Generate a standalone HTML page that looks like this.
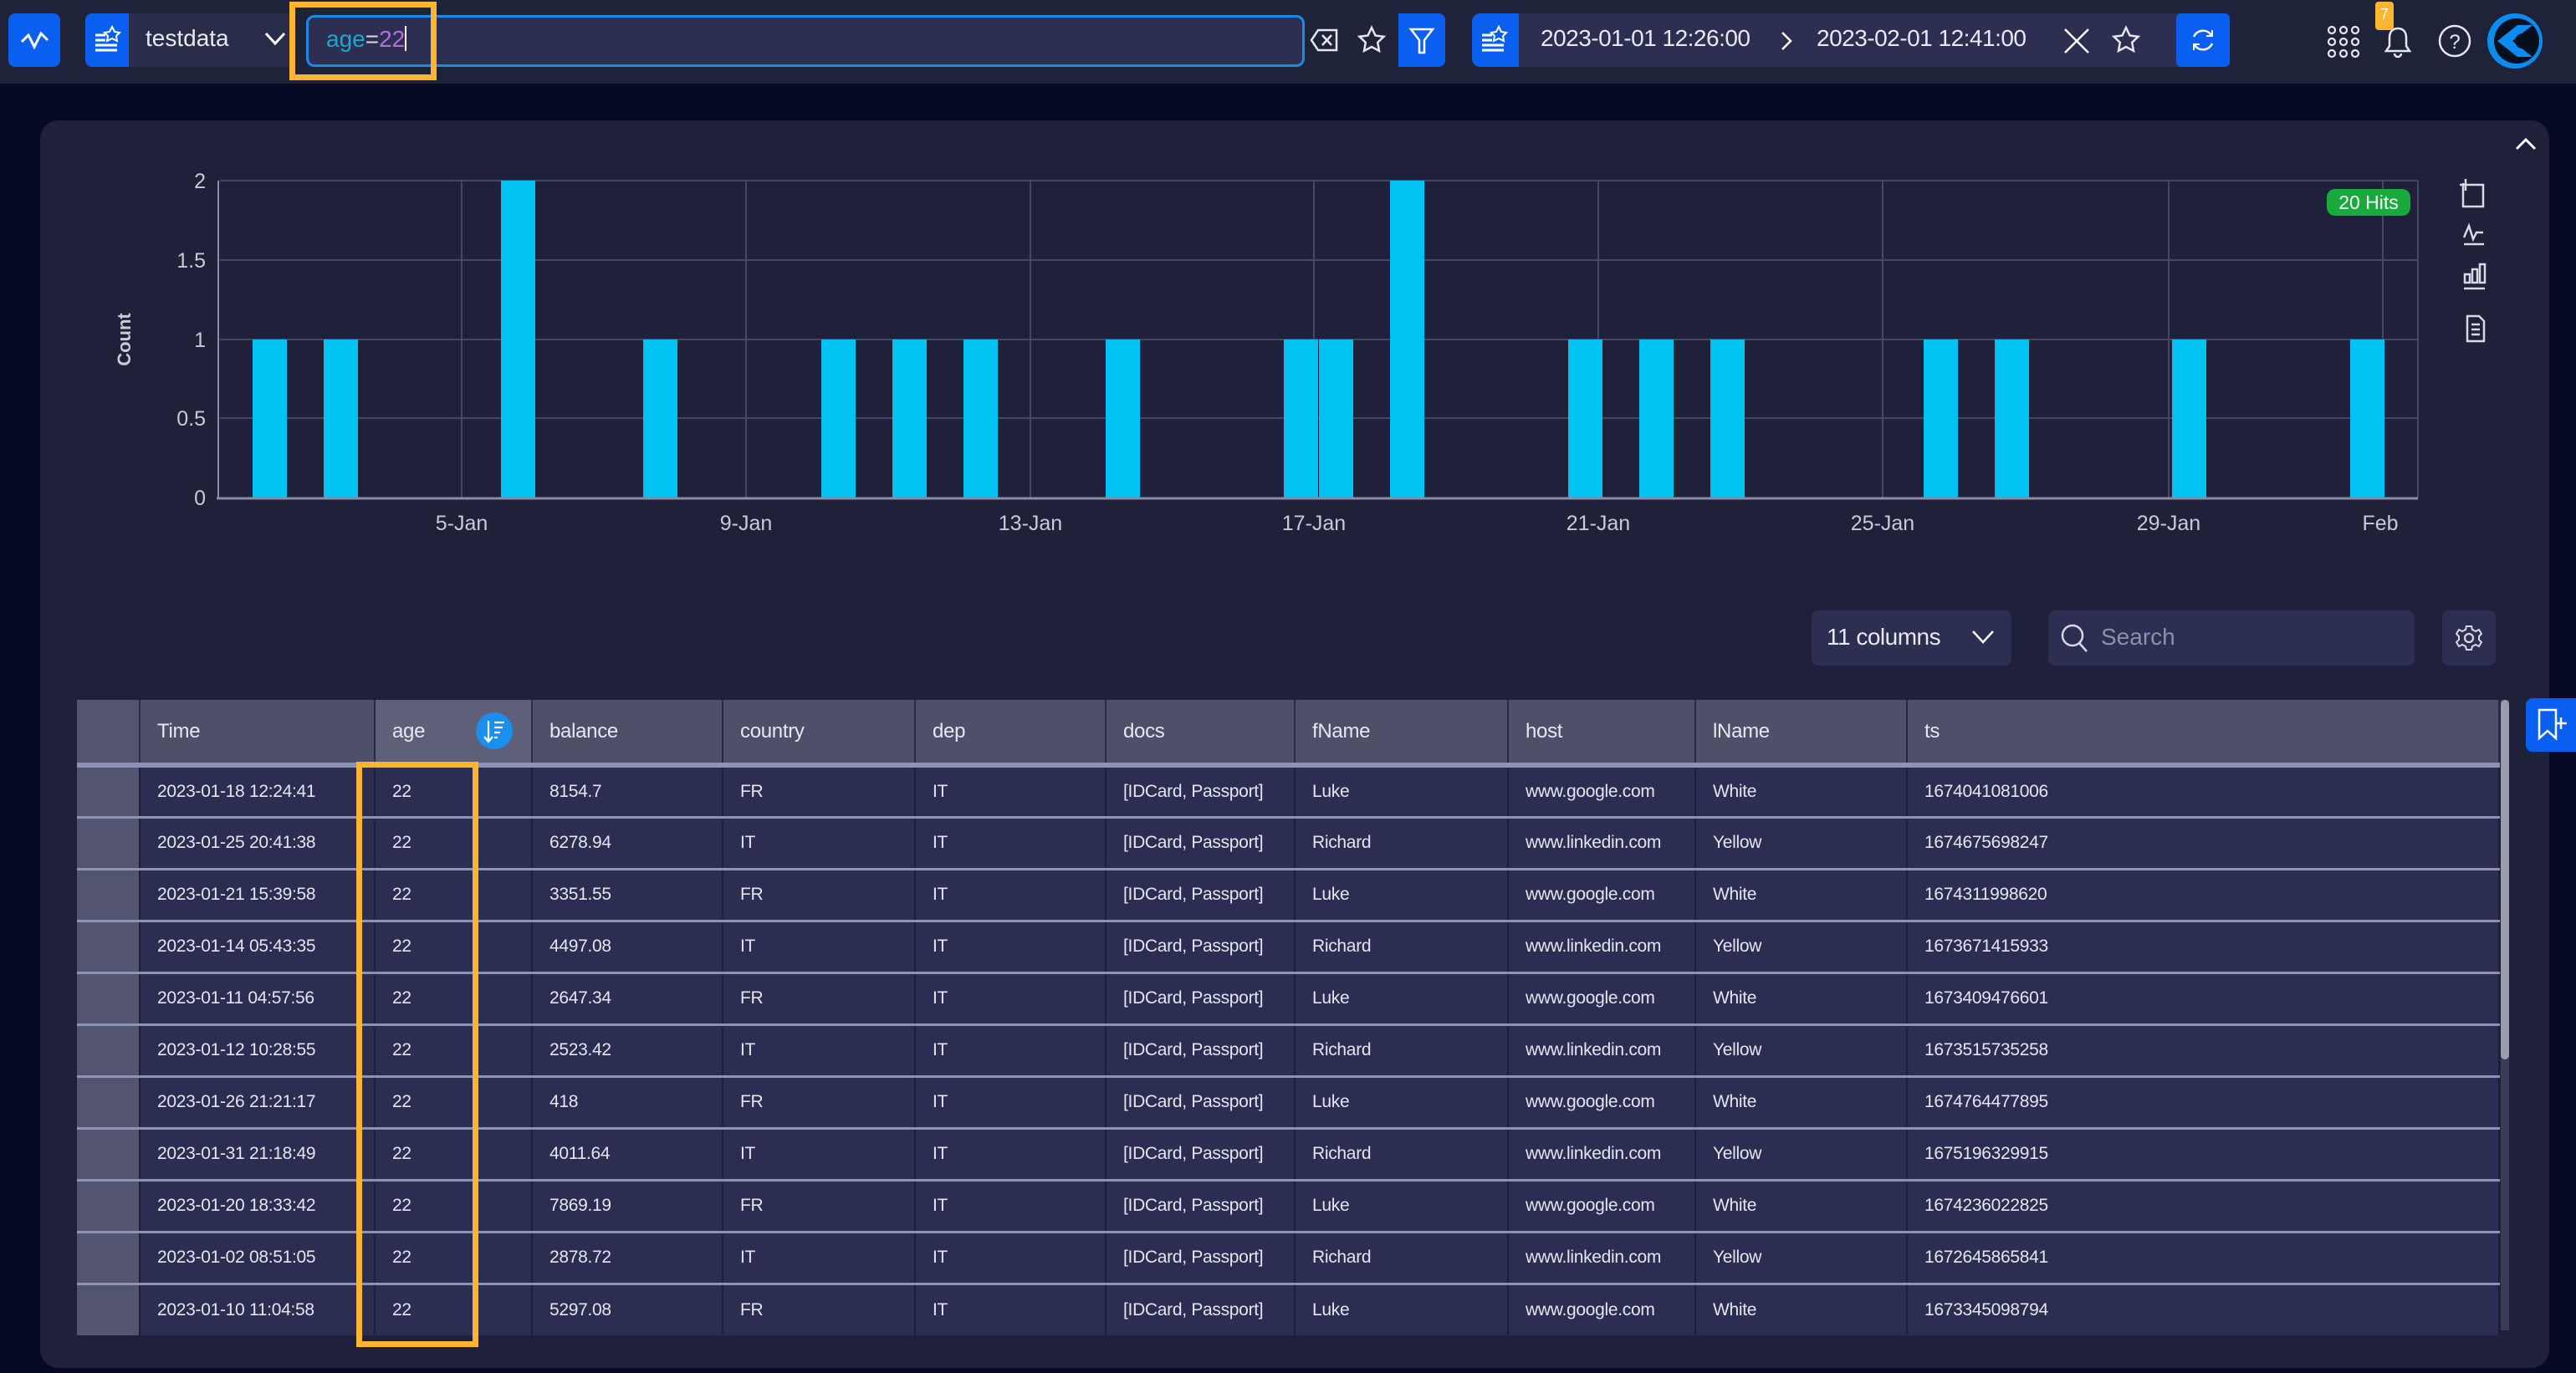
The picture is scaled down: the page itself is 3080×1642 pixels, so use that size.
<!DOCTYPE html>
<html><head><meta charset="utf-8"><style>
*{box-sizing:border-box;margin:0;padding:0}
body{width:3080px;height:1642px;background:#060a24;font-family:"Liberation Sans",sans-serif;color:#e8e9f0;position:relative;overflow:hidden}
.abs{position:absolute}
.blue{background:#0b5ff0}
table{position:absolute;left:92px;top:837px;border-collapse:collapse;table-layout:fixed;width:2896px;font-size:21px;letter-spacing:-.3px}
th{height:78px;background:#4d5068;font-weight:normal;text-align:left;padding-left:20px;font-size:24px;color:#e6e7ef;border-right:2px solid #2a2c45;border-bottom:6px solid #8d93b5}
td{height:62px;background:#2b2e52;padding-left:20px;border-right:2px solid #1d1f38;border-top:3px solid #8d93b5;color:#e4e5ee;white-space:nowrap}
tbody tr:first-child td{border-top:none}
td.g,th.g{background:#525470;padding:0}
.ico{stroke:#d8d9e4;fill:none;stroke-width:2.5}
</style></head><body>
<div class="abs" style="left:0;top:0;width:3080px;height:100px;background:#1f2339"></div>
<div class="abs blue" style="left:10px;top:16px;width:62px;height:64px;border-radius:8px"></div>
<svg class="abs" style="left:24px;top:32px" width="36" height="32"><path d="M2 18 L10 10 L17 24 L25 8 L33 16" stroke="#fff" stroke-width="3" fill="none"/></svg>
<div class="abs" style="left:102px;top:16px;width:250px;height:64px;background:#2a2d4a;border-radius:8px"></div>
<div class="abs blue" style="left:102px;top:16px;width:52px;height:64px;border-radius:8px 0 0 8px"></div>
<svg class="abs" style="left:110px;top:28px" width="36" height="40"><path d="M4 14h12M4 20h12M4 26h26M4 32h26" stroke="#fff" stroke-width="3"/><path d="M24 4l3 6 6 1-4 4 1 6-6-3-6 3 1-6-4-4 6-1z" stroke="#fff" stroke-width="2" fill="none"/></svg>
<div class="abs" style="left:174px;top:30px;font-size:28px">testdata</div>
<svg class="abs" style="left:316px;top:38px" width="26" height="18"><path d="M2 2l11 12 11-12" stroke="#fff" stroke-width="3" fill="none"/></svg>
<div class="abs" style="left:366px;top:18px;width:1194px;height:62px;background:#2c2f52;border:3px solid #1e88e5;border-radius:10px"></div>
<div class="abs" style="left:390px;top:31px;font-size:28px"><span style="color:#1fa6c9">age</span><span style="color:#ddd">=</span><span style="color:#b56edc">22</span><span style="display:inline-block;width:2px;height:30px;background:#fff;vertical-align:-5px"></span></div>
<div class="abs" style="left:346px;top:2px;width:176px;height:94px;border:7px solid #fbb52e"></div>
<svg class="abs" style="left:1566px;top:34px" width="34" height="28"><path d="M10 2h22v24H10L2 14z" stroke="#e5e6ee" stroke-width="2.5" fill="none"/><path d="M15 8l11 12M26 8L15 20" stroke="#e5e6ee" stroke-width="2.5"/></svg>
<svg class="abs" style="left:1622px;top:30px" width="36" height="36"><path d="M18 3l4.5 9.5 10 1.3-7.3 7 1.8 10L18 26l-9 4.8 1.8-10-7.3-7 10-1.3z" stroke="#e5e6ee" stroke-width="2.5" fill="none"/></svg>
<div class="abs blue" style="left:1672px;top:16px;width:56px;height:64px;border-radius:0 8px 8px 0"></div>
<svg class="abs" style="left:1684px;top:32px" width="32" height="34"><path d="M3 3h26L19 16v15h-6V16z" stroke="#fff" stroke-width="2.5" fill="none"/></svg>
<div class="abs" style="left:1760px;top:16px;width:862px;height:64px;background:#2c2f52;border-radius:10px"></div>
<div class="abs blue" style="left:1760px;top:16px;width:56px;height:64px;border-radius:10px 0 0 10px"></div>
<svg class="abs" style="left:1768px;top:28px" width="36" height="40"><path d="M4 14h12M4 20h12M4 26h26M4 32h26" stroke="#fff" stroke-width="3"/><path d="M24 4l3 6 6 1-4 4 1 6-6-3-6 3 1-6-4-4 6-1z" stroke="#fff" stroke-width="2" fill="none"/></svg>
<div class="abs" style="left:1842px;top:30px;font-size:28px;letter-spacing:-.5px">2023-01-01 12:26:00</div>
<svg class="abs" style="left:2128px;top:36px" width="16" height="26"><path d="M3 3l10 10-10 10" stroke="#fff" stroke-width="2.5" fill="none"/></svg>
<div class="abs" style="left:2172px;top:30px;font-size:28px;letter-spacing:-.5px">2023-02-01 12:41:00</div>
<svg class="abs" style="left:2466px;top:32px" width="34" height="34"><path d="M3 3l28 28M31 3L3 31" stroke="#fff" stroke-width="2.5"/></svg>
<svg class="abs" style="left:2524px;top:30px" width="36" height="36"><path d="M18 3l4.5 9.5 10 1.3-7.3 7 1.8 10L18 26l-9 4.8 1.8-10-7.3-7 10-1.3z" stroke="#e5e6ee" stroke-width="2.5" fill="none"/></svg>
<div class="abs blue" style="left:2602px;top:16px;width:64px;height:64px;border-radius:6px"></div>
<svg class="abs" style="left:2618px;top:32px" width="32" height="32"><path d="M26 10A12 12 0 0 0 5 12M6 22a12 12 0 0 0 21-2" stroke="#fff" stroke-width="2.5" fill="none"/><path d="M27 4v7h-7M5 28v-7h7" stroke="#fff" stroke-width="2" fill="none"/></svg>
<svg class="abs" style="left:2782px;top:30px" width="40" height="40"><g stroke="#e5e6ee" stroke-width="2.2" fill="none"><circle cx="6" cy="6" r="4"/><circle cx="20" cy="6" r="4"/><circle cx="34" cy="6" r="4"/><circle cx="6" cy="20" r="4"/><circle cx="20" cy="20" r="4"/><circle cx="34" cy="20" r="4"/><circle cx="6" cy="34" r="4"/><circle cx="20" cy="34" r="4"/><circle cx="34" cy="34" r="4"/></g></svg>
<svg class="abs" style="left:2850px;top:28px" width="34" height="42"><path d="M17 6c-7 0-10 5-10 11v10l-4 6h28l-4-6V17c0-6-3-11-10-11zM13 36a4 4 0 0 0 8 0" stroke="#e5e6ee" stroke-width="2.5" fill="none"/></svg>
<div class="abs" style="left:2840px;top:2px;width:22px;height:34px;background:#fbb52e;border-radius:4px;font-size:18px;color:#fff;text-align:center;line-height:30px">7</div>
<svg class="abs" style="left:2914px;top:28px" width="42" height="42"><circle cx="21" cy="21" r="18" stroke="#e5e6ee" stroke-width="2.5" fill="none"/><text x="21" y="30" font-size="24" fill="#e5e6ee" text-anchor="middle" font-family="Liberation Sans">?</text></svg>
<svg class="abs" style="left:2972px;top:14px" width="70" height="70"><circle cx="35" cy="35" r="33" fill="#0a8cf0"/><circle cx="37" cy="35" r="27" fill="#05101f"/><path d="M14 35L38 16h18L32 35l24 19H38z" fill="#0a8cf0"/><circle cx="44" cy="35" r="9" fill="#05101f"/></svg>

<div class="abs" style="left:48px;top:144px;width:3000px;height:1492px;background:#1e2139;border-radius:22px"></div>
<svg class="abs" style="left:3006px;top:162px" width="28" height="20"><path d="M3 16L14 5l11 11" stroke="#fff" stroke-width="3" fill="none"/></svg>
<svg class="abs" style="left:0;top:0" width="3000" height="660">
<g stroke="#444862" stroke-width="2">
<line x1="263" y1="216" x2="2891" y2="216"/><line x1="263" y1="311" x2="2891" y2="311"/><line x1="263" y1="406" x2="2891" y2="406"/><line x1="263" y1="500" x2="2891" y2="500"/>
<line x1="552" y1="216" x2="552" y2="595"/><line x1="892" y1="216" x2="892" y2="595"/><line x1="1232" y1="216" x2="1232" y2="595"/><line x1="1571" y1="216" x2="1571" y2="595"/><line x1="1911" y1="216" x2="1911" y2="595"/><line x1="2251" y1="216" x2="2251" y2="595"/><line x1="2593" y1="216" x2="2593" y2="595"/><line x1="2849" y1="216" x2="2849" y2="595"/><line x1="2891" y1="216" x2="2891" y2="595"/>
</g>
<g fill="#00c2f3">
<rect x="302" y="406" width="41" height="189"/><rect x="387" y="406" width="41" height="189"/><rect x="599" y="216" width="41" height="379"/><rect x="769" y="406" width="41" height="189"/><rect x="982" y="406" width="41" height="189"/><rect x="1067" y="406" width="41" height="189"/><rect x="1152" y="406" width="41" height="189"/><rect x="1322" y="406" width="41" height="189"/><rect x="1535" y="406" width="41" height="189"/><rect x="1577" y="406" width="41" height="189"/><rect x="1662" y="216" width="41" height="379"/><rect x="1875" y="406" width="41" height="189"/><rect x="1960" y="406" width="41" height="189"/><rect x="2045" y="406" width="41" height="189"/><rect x="2300" y="406" width="41" height="189"/><rect x="2385" y="406" width="41" height="189"/><rect x="2597" y="406" width="41" height="189"/><rect x="2810" y="406" width="41" height="189"/>
</g>
<line x1="261" y1="216" x2="261" y2="596" stroke="#8a8da3" stroke-width="2"/>
<line x1="259" y1="596" x2="2891" y2="596" stroke="#8a8da3" stroke-width="3"/>
<g font-family="Liberation Sans" font-size="25" fill="#c9cad6" text-anchor="end">
<text x="246" y="225">2</text><text x="246" y="320">1.5</text><text x="246" y="415">1</text><text x="246" y="509">0.5</text><text x="246" y="604">0</text></g>
<text transform="translate(156,406) rotate(-90)" font-family="Liberation Sans" font-size="22" font-weight="bold" fill="#c9cad6" text-anchor="middle">Count</text>
<g font-family="Liberation Sans" font-size="25" fill="#c9cad6" text-anchor="middle">
<text x="552" y="634">5-Jan</text><text x="892" y="634">9-Jan</text><text x="1232" y="634">13-Jan</text><text x="1571" y="634">17-Jan</text><text x="1911" y="634">21-Jan</text><text x="2251" y="634">25-Jan</text><text x="2593" y="634">29-Jan</text><text x="2846" y="634">Feb</text></g>
<rect x="2782" y="226" width="100" height="32" rx="10" fill="#18aa3c"/>
<text x="2832" y="250" font-family="Liberation Sans" font-size="23" fill="#fff" text-anchor="middle">20 Hits</text>
<g class="ico"><path d="M2948 214v14M2941 221h28v26h-24v-28"/><path d="M2946 284l6-14 5 16 4-8h8M2946 292h24"/><path d="M2947 338v-10h6v10zM2956 338v-16h6v16zM2965 338v-22h6v22zM2946 345h25"/><path d="M2950 378h14l6 6v24h-20zM2955 388h10M2955 394h10M2955 400h10"/></g>
</svg>

<div class="abs" style="left:2166px;top:730px;width:239px;height:66px;background:#2c2f52;border-radius:8px"></div>
<div class="abs" style="left:2184px;top:746px;font-size:28px;letter-spacing:-.5px">11 columns</div>
<svg class="abs" style="left:2356px;top:752px" width="30" height="20"><path d="M3 3l12 13 12-13" stroke="#fff" stroke-width="2.5" fill="none"/></svg>
<div class="abs" style="left:2449px;top:730px;width:438px;height:66px;background:#2c2f52;border-radius:8px"></div>
<svg class="abs" style="left:2462px;top:744px" width="38" height="40"><circle cx="16" cy="16" r="12" stroke="#d8d9e4" stroke-width="2.5" fill="none"/><path d="M24 25l9 10" stroke="#d8d9e4" stroke-width="2.5"/></svg>
<div class="abs" style="left:2512px;top:746px;font-size:28px;color:#8e90a6">Search</div>
<div class="abs" style="left:2920px;top:730px;width:64px;height:66px;background:#2c2f52;border-radius:8px"></div>
<svg class="abs" style="left:2936px;top:747px" width="32" height="32"><circle cx="16" cy="16" r="5" stroke="#d8d9e4" stroke-width="2.2" fill="none"/><path d="M13 2h6l1 4 4 2 4-2 3 5-3 3v4l3 3-3 5-4-2-4 2-1 4h-6l-1-4-4-2-4 2-3-5 3-3v-4l-3-3 3-5 4 2 4-2z" stroke="#d8d9e4" stroke-width="2" fill="none"/></svg>

<table>
<colgroup><col style="width:75px"><col style="width:281px"><col style="width:188px"><col style="width:228px"><col style="width:230px"><col style="width:228px"><col style="width:226px"><col style="width:255px"><col style="width:224px"><col style="width:253px"><col style="width:708px"></colgroup>
<thead><tr><th class="g"></th><th>Time</th><th style="background:#5e6079">age</th><th>balance</th><th>country</th><th>dep</th><th>docs</th><th>fName</th><th>host</th><th>lName</th><th>ts</th></tr></thead>
<tbody>
<tr><td class="g"></td><td>2023-01-18 12:24:41</td><td>22</td><td>8154.7</td><td>FR</td><td>IT</td><td>[IDCard, Passport]</td><td>Luke</td><td>www.google.com</td><td>White</td><td>1674041081006</td></tr>
<tr><td class="g"></td><td>2023-01-25 20:41:38</td><td>22</td><td>6278.94</td><td>IT</td><td>IT</td><td>[IDCard, Passport]</td><td>Richard</td><td>www.linkedin.com</td><td>Yellow</td><td>1674675698247</td></tr>
<tr><td class="g"></td><td>2023-01-21 15:39:58</td><td>22</td><td>3351.55</td><td>FR</td><td>IT</td><td>[IDCard, Passport]</td><td>Luke</td><td>www.google.com</td><td>White</td><td>1674311998620</td></tr>
<tr><td class="g"></td><td>2023-01-14 05:43:35</td><td>22</td><td>4497.08</td><td>IT</td><td>IT</td><td>[IDCard, Passport]</td><td>Richard</td><td>www.linkedin.com</td><td>Yellow</td><td>1673671415933</td></tr>
<tr><td class="g"></td><td>2023-01-11 04:57:56</td><td>22</td><td>2647.34</td><td>FR</td><td>IT</td><td>[IDCard, Passport]</td><td>Luke</td><td>www.google.com</td><td>White</td><td>1673409476601</td></tr>
<tr><td class="g"></td><td>2023-01-12 10:28:55</td><td>22</td><td>2523.42</td><td>IT</td><td>IT</td><td>[IDCard, Passport]</td><td>Richard</td><td>www.linkedin.com</td><td>Yellow</td><td>1673515735258</td></tr>
<tr><td class="g"></td><td>2023-01-26 21:21:17</td><td>22</td><td>418</td><td>FR</td><td>IT</td><td>[IDCard, Passport]</td><td>Luke</td><td>www.google.com</td><td>White</td><td>1674764477895</td></tr>
<tr><td class="g"></td><td>2023-01-31 21:18:49</td><td>22</td><td>4011.64</td><td>IT</td><td>IT</td><td>[IDCard, Passport]</td><td>Richard</td><td>www.linkedin.com</td><td>Yellow</td><td>1675196329915</td></tr>
<tr><td class="g"></td><td>2023-01-20 18:33:42</td><td>22</td><td>7869.19</td><td>FR</td><td>IT</td><td>[IDCard, Passport]</td><td>Luke</td><td>www.google.com</td><td>White</td><td>1674236022825</td></tr>
<tr><td class="g"></td><td>2023-01-02 08:51:05</td><td>22</td><td>2878.72</td><td>IT</td><td>IT</td><td>[IDCard, Passport]</td><td>Richard</td><td>www.linkedin.com</td><td>Yellow</td><td>1672645865841</td></tr>
<tr><td class="g"></td><td>2023-01-10 11:04:58</td><td>22</td><td>5297.08</td><td>FR</td><td>IT</td><td>[IDCard, Passport]</td><td>Luke</td><td>www.google.com</td><td>White</td><td>1673345098794</td></tr>
</tbody></table>

<svg class="abs" style="left:569px;top:852px" width="44" height="44"><circle cx="22" cy="22" r="22" fill="#1a8ff0"/><path d="M15 10v24M10 29l5 6 5-6M22 12h12M22 18h10M22 24h7M22 30h4" stroke="#fff" stroke-width="2.2" fill="none"/></svg>
<div class="abs" style="left:2990px;top:837px;width:10px;height:754px;background:#3a3d58"></div>
<div class="abs" style="left:2990px;top:837px;width:10px;height:430px;background:#9a9cae;border-radius:5px"></div>
<div class="abs" style="left:426px;top:911px;width:146px;height:700px;border:7px solid #fbb52e"></div>
<div class="abs blue" style="left:3020px;top:835px;width:60px;height:64px;border-radius:8px 0 0 8px"></div>
<svg class="abs" style="left:3032px;top:846px" width="40" height="42"><path d="M4 3h20v34l-10-9-10 9z" stroke="#fff" stroke-width="2.5" fill="none"/><path d="M30 12v14M23 19h14" stroke="#fff" stroke-width="2.5"/></svg>
</body></html>
